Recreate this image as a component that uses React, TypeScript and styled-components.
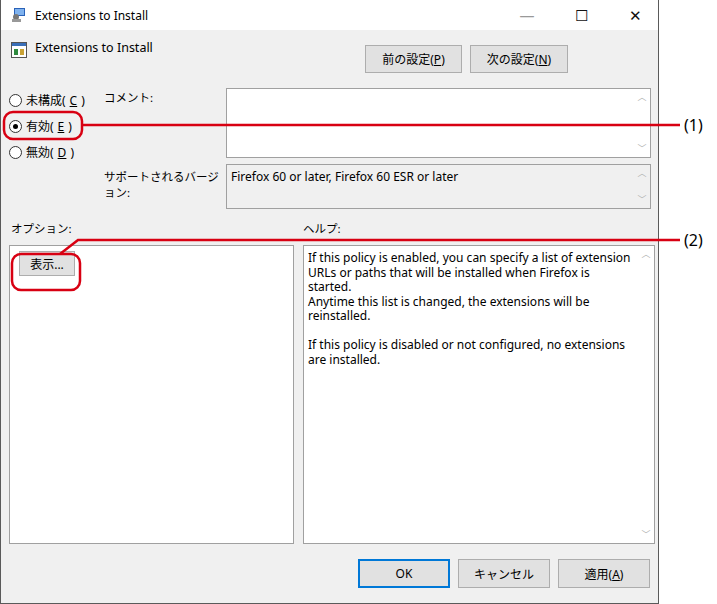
import styled, { createGlobalStyle } from "styled-components"

const Global = createGlobalStyle`
  html, body { margin: 0; padding: 0; background: #fff; }
  body { font-family: "Noto Sans", "Noto Sans CJK JP", sans-serif; font-size: 12px; color: #000; }
`

const Page = styled.div`
  position: relative;
  width: 717px;
  height: 604px;
  overflow: hidden;
`

const Window = styled.div`
  width: 657px;
  height: 603px;
  border: 1px solid #5a5a5a;
  border-top: none;
  background: #f0f0f0;
  display: flex;
  flex-direction: column;
`

const TitleBar = styled.div`
  height: 30px;
  background: #fff;
  display: flex;
  align-items: center;
  padding-left: 10px;
  gap: 8px;
`

const TitleText = styled.span`
  flex: 1;
  font-size: 12px;
`

const Ctrl = styled.span<{ $dim?: boolean }>`
  width: 46px;
  text-align: center;
  font-size: 15px;
  color: ${p => (p.$dim ? "#999" : "#111")};
`

const Header = styled.div`
  display: flex;
  height: 52px;
  padding: 10px 0 0 10px;
  box-sizing: border-box;
`

const HeaderTitle = styled.div`
  display: flex;
  gap: 8px;
  width: 354px;
  font-size: 12.5px;
  line-height: 16px;
`

const Btn = styled.button<{ $w: number; $h?: number; $focus?: boolean }>`
  width: ${p => p.$w}px;
  height: ${p => p.$h ?? 28}px;
  background: #e1e1e1;
  border: 1px solid ${p => (p.$focus ? "#0078d7" : "#adadad")};
  box-shadow: ${p => (p.$focus ? "inset 0 0 0 1px #0078d7" : "none")};
  font-family: inherit;
  font-size: 12px;
  padding: 0;
  margin-right: 8px;
  margin-top: 5px;
`

const Middle = styled.div`
  display: grid;
  grid-template-columns: 95px 122px 425px;
  grid-template-rows: 70px 45px;
  row-gap: 6px;
  padding-left: 8px;
  margin-top: 6px;
`

const Radios = styled.div`
  grid-row: 1 / 3;
  display: flex;
  flex-direction: column;
  gap: 8px;
  padding-top: 3px;
`

const Radio = styled.label`
  display: flex;
  align-items: center;
  gap: 4px;
  height: 18px;
`

const Dot = styled.span<{ $on?: boolean }>`
  width: 11px;
  height: 11px;
  border: 1px solid #333;
  border-radius: 50%;
  background: #fff;
  display: flex;
  align-items: center;
  justify-content: center;
  &::after {
    content: "";
    width: 5px;
    height: 5px;
    border-radius: 50%;
    background: ${p => (p.$on ? "#000" : "transparent")};
  }
`

const Label = styled.div<{ $top?: number }>`
  padding-top: ${p => p.$top ?? 0}px;
  font-size: 11.5px;
`

const TextBox = styled.div<{ $gray?: boolean }>`
  position: relative;
  border: 1px solid #a0a0a0;
  background: ${p => (p.$gray ? "#f0f0f0" : "#fff")};
  padding: 3px 20px 0 4px;
  font-size: 12px;
`

const Scroll = styled.div`
  position: absolute;
  right: 2px;
  top: 2px;
  bottom: 2px;
  width: 12px;
  display: flex;
  flex-direction: column;
  justify-content: space-between;
  align-items: center;
  color: #b0b0b0;
  font-size: 9px;
  line-height: 12px;
`

const Captions = styled.div`
  display: flex;
  padding: 11px 0 0 10px;
  height: 36px;
  box-sizing: border-box;
  font-size: 11.5px;
  & > span:first-child { width: 292px; }
`

const Panels = styled.div`
  display: flex;
  padding-left: 8px;
  height: 299px;
  gap: 9px;
`

const Panel = styled.div<{ $w: number }>`
  position: relative;
  width: ${p => p.$w}px;
  border: 1px solid #a0a0a0;
  background: #fff;
  box-sizing: border-box;
  padding: 5px 20px 0 9px;
`

const HelpText = styled.div`
  padding-left: 0;
  margin-left: -5px;
  font-size: 12px;
  line-height: 14.5px;
  white-space: pre-line;
`

const Footer = styled.div`
  display: flex;
  justify-content: flex-end;
  padding: 10px 0 0 0;
`

const Overlay = styled.svg`
  position: absolute;
  left: 0;
  top: 0;
  pointer-events: none;
`

const Note = styled.span<{ $y: number }>`
  position: absolute;
  left: 684px;
  top: ${p => p.$y}px;
  font-size: 16px;
  font-family: "Noto Sans", sans-serif;
`

const u = (s: string) => <span style={{ textDecoration: "underline" }}>{s}</span>

export default function App() {
  return (
    <Page>
      <Global />
      <Window>
        <TitleBar>
          <svg width="16" height="16" viewBox="0 0 16 16">
            <rect x="3" y="1" width="11" height="8" fill="#2a62b8" />
            <rect x="4" y="2" width="9" height="6" fill="#7fb2ee" />
            <circle cx="5" cy="10" r="3" fill="#777" />
            <rect x="1" y="12" width="9" height="3" fill="#999" />
          </svg>
          <TitleText>Extensions to Install</TitleText>
          <Ctrl $dim>—</Ctrl>
          <Ctrl>☐</Ctrl>
          <Ctrl>✕</Ctrl>
        </TitleBar>
        <Header>
          <HeaderTitle>
            <svg width="16" height="16" viewBox="0 0 16 16" style={{ marginTop: 2 }}>
              <rect x="0.5" y="0.5" width="15" height="15" fill="#fff" stroke="#555" />
              <rect x="1" y="1" width="14" height="3" fill="#3a6fb8" />
              <rect x="3" y="7" width="4" height="6" fill="#2f8a3f" />
              <rect x="9" y="7" width="4" height="6" fill="#c9a234" />
            </svg>
            Extensions to Install
          </HeaderTitle>
          <Btn $w={97}>前の設定({u("P")})</Btn>
          <Btn $w={98}>次の設定({u("N")})</Btn>
        </Header>
        <Middle>
          <Radios>
            <Radio><Dot />未構成({u("C")})</Radio>
            <Radio><Dot $on />有効({u("E")})</Radio>
            <Radio><Dot />無効({u("D")})</Radio>
          </Radios>
          <Label $top={1}>コメント:</Label>
          <TextBox>
            <Scroll><span>︿</span><span>﹀</span></Scroll>
          </TextBox>
          <Label $top={4}>サポートされるバージョン:</Label>
          <TextBox $gray>
            Firefox 60 or later, Firefox 60 ESR or later
            <Scroll><span>︿</span><span>﹀</span></Scroll>
          </TextBox>
        </Middle>
        <Captions>
          <span>オプション:</span>
          <span>ヘルプ:</span>
        </Captions>
        <Panels>
          <Panel $w={285}>
            <Btn $w={56} $h={25} style={{ marginTop: 0 }}>表示...</Btn>
          </Panel>
          <Panel $w={352}>
            <HelpText>
              {"If this policy is enabled, you can specify a list of extension URLs or paths that will be installed when Firefox is started.\nAnytime this list is changed, the extensions will be reinstalled.\n\nIf this policy is disabled or not configured, no extensions are installed."}
            </HelpText>
            <Scroll><span>︿</span><span>﹀</span></Scroll>
          </Panel>
        </Panels>
        <Footer>
          <Btn $w={92} $h={29} $focus>OK</Btn>
          <Btn $w={92} $h={29}>キャンセル</Btn>
          <Btn $w={92} $h={29}>適用({u("A")})</Btn>
        </Footer>
      </Window>
      <Overlay width="717" height="604">
        <g fill="none" stroke="#d80012" strokeWidth="2.5">
          <rect x="4" y="112" width="78" height="27" rx="9" />
          <line x1="82" y1="125" x2="680" y2="125" />
          <rect x="12" y="254" width="68" height="36" rx="9" />
          <polyline points="60,254 78,240 680,240" />
        </g>
      </Overlay>
      <Note $y={114}>(1)</Note>
      <Note $y={229}>(2)</Note>
    </Page>
  )
}
